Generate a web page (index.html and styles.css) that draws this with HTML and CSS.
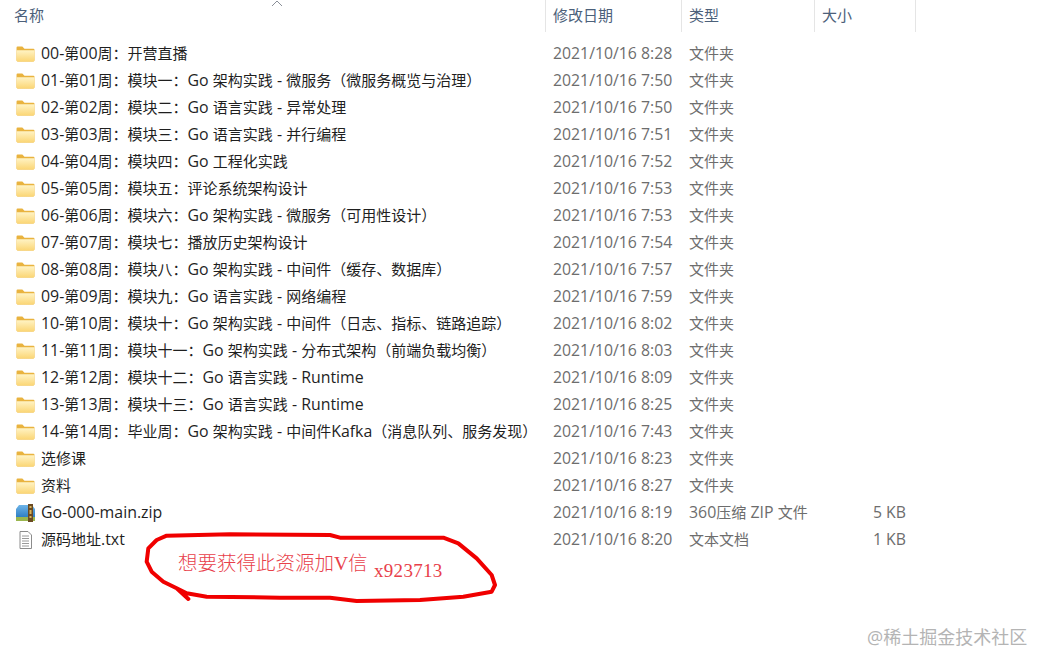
FILE: index.html
```html
<!DOCTYPE html>
<html lang="zh">
<head>
<meta charset="utf-8">
<title>文件列表</title>
<link rel="stylesheet" href="styles.css">
</head>
<body>
<svg width="0" height="0" class="defs">
  <defs>
    <linearGradient id="fg" x1="0" y1="0" x2="0" y2="1">
      <stop offset="0" stop-color="#fff3c4"/>
      <stop offset="1" stop-color="#fbd675"/>
    </linearGradient>
    <linearGradient id="zb" x1="0" y1="0" x2="0" y2="1">
      <stop offset="0" stop-color="#6db4e8"/>
      <stop offset="1" stop-color="#2f7fc4"/>
    </linearGradient>
    <symbol id="folder" viewBox="0 0 18 16">
      <path d="M0.5 2a1 1 0 0 1 1-1h4.500l2 2h8.500a1 1 0 0 1 1 1V14a1 1 0 0 1-1 1h-15a1 1 0 0 1-1-1z" fill="#e9b33f"/>
      <path d="M0.5 4.500h17V14a1 1 0 0 1-1 1h-15a1 1 0 0 1-1-1z" fill="url(#fg)"/>
    </symbol>
    <symbol id="zip" viewBox="0 0 19 18">
      <path d="M0 5l3-4h13l3 4v8H0z" fill="url(#zb)"/>
      <path d="M0 13h19v4H0z" fill="#9ab64e"/>
      <rect x="12" y="0" width="5" height="18" fill="#6b4a22"/>
      <rect x="13.500" y="2" width="2" height="2" fill="#d8b45a"/>
      <rect x="13.500" y="6" width="2" height="4" fill="#d8b45a"/>
      <rect x="13.500" y="12" width="2" height="2" fill="#d8b45a"/>
    </symbol>
    <symbol id="txt" viewBox="0 0 18 18">
      <path d="M3.500 .5h8l3.500 3.500v13.500h-11.500z" fill="#fff" stroke="#8c8c8c"/>
      <path d="M5.500 5h7M5.500 7.500h7M5.500 10h7M5.500 12.500h7M5.500 15h7" stroke="#9a9a9a"/>
    </symbol>
  </defs>
</svg>

<svg class="sort-caret" width="12" height="6" viewBox="0 0 12 6"><path d="M1 6l5-5 5 5" fill="none" stroke="#8a8f98"/></svg>

<header class="head">
  <div class="col-name">名称</div>
  <div class="col-date">修改日期</div>
  <div class="col-type">类型</div>
  <div class="col-size">大小</div>
</header>

<main class="list">
  <div class="row"><svg class="icon"><use href="#folder"/></svg><span class="col-name"><span class="la">00-</span>第<span class="la">00</span>周：开营直播</span><span class="col-date">2021/10/16 8:28</span><span class="col-type">文件夹</span></div>
  <div class="row"><svg class="icon"><use href="#folder"/></svg><span class="col-name"><span class="la">01-</span>第<span class="la">01</span>周：模块一：<span class="la">Go </span>架构实践<span class="la"> - </span>微服务（微服务概览与治理）</span><span class="col-date">2021/10/16 7:50</span><span class="col-type">文件夹</span></div>
  <div class="row"><svg class="icon"><use href="#folder"/></svg><span class="col-name"><span class="la">02-</span>第<span class="la">02</span>周：模块二：<span class="la">Go </span>语言实践<span class="la"> - </span>异常处理</span><span class="col-date">2021/10/16 7:50</span><span class="col-type">文件夹</span></div>
  <div class="row"><svg class="icon"><use href="#folder"/></svg><span class="col-name"><span class="la">03-</span>第<span class="la">03</span>周：模块三：<span class="la">Go </span>语言实践<span class="la"> - </span>并行编程</span><span class="col-date">2021/10/16 7:51</span><span class="col-type">文件夹</span></div>
  <div class="row"><svg class="icon"><use href="#folder"/></svg><span class="col-name"><span class="la">04-</span>第<span class="la">04</span>周：模块四：<span class="la">Go </span>工程化实践</span><span class="col-date">2021/10/16 7:52</span><span class="col-type">文件夹</span></div>
  <div class="row"><svg class="icon"><use href="#folder"/></svg><span class="col-name"><span class="la">05-</span>第<span class="la">05</span>周：模块五：评论系统架构设计</span><span class="col-date">2021/10/16 7:53</span><span class="col-type">文件夹</span></div>
  <div class="row"><svg class="icon"><use href="#folder"/></svg><span class="col-name"><span class="la">06-</span>第<span class="la">06</span>周：模块六：<span class="la">Go </span>架构实践<span class="la"> - </span>微服务（可用性设计）</span><span class="col-date">2021/10/16 7:53</span><span class="col-type">文件夹</span></div>
  <div class="row"><svg class="icon"><use href="#folder"/></svg><span class="col-name"><span class="la">07-</span>第<span class="la">07</span>周：模块七：播放历史架构设计</span><span class="col-date">2021/10/16 7:54</span><span class="col-type">文件夹</span></div>
  <div class="row"><svg class="icon"><use href="#folder"/></svg><span class="col-name"><span class="la">08-</span>第<span class="la">08</span>周：模块八：<span class="la">Go </span>架构实践<span class="la"> - </span>中间件（缓存、数据库）</span><span class="col-date">2021/10/16 7:57</span><span class="col-type">文件夹</span></div>
  <div class="row"><svg class="icon"><use href="#folder"/></svg><span class="col-name"><span class="la">09-</span>第<span class="la">09</span>周：模块九：<span class="la">Go </span>语言实践<span class="la"> - </span>网络编程</span><span class="col-date">2021/10/16 7:59</span><span class="col-type">文件夹</span></div>
  <div class="row"><svg class="icon"><use href="#folder"/></svg><span class="col-name"><span class="la">10-</span>第<span class="la">10</span>周：模块十：<span class="la">Go </span>架构实践<span class="la"> - </span>中间件（日志、指标、链路追踪）</span><span class="col-date">2021/10/16 8:02</span><span class="col-type">文件夹</span></div>
  <div class="row"><svg class="icon"><use href="#folder"/></svg><span class="col-name"><span class="la">11-</span>第<span class="la">11</span>周：模块十一：<span class="la">Go </span>架构实践<span class="la"> - </span>分布式架构（前端负载均衡）</span><span class="col-date">2021/10/16 8:03</span><span class="col-type">文件夹</span></div>
  <div class="row"><svg class="icon"><use href="#folder"/></svg><span class="col-name"><span class="la">12-</span>第<span class="la">12</span>周：模块十二：<span class="la">Go </span>语言实践<span class="la"> - Runtime</span></span><span class="col-date">2021/10/16 8:09</span><span class="col-type">文件夹</span></div>
  <div class="row"><svg class="icon"><use href="#folder"/></svg><span class="col-name"><span class="la">13-</span>第<span class="la">13</span>周：模块十三：<span class="la">Go </span>语言实践<span class="la"> - Runtime</span></span><span class="col-date">2021/10/16 8:25</span><span class="col-type">文件夹</span></div>
  <div class="row"><svg class="icon"><use href="#folder"/></svg><span class="col-name"><span class="la">14-</span>第<span class="la">14</span>周：毕业周：<span class="la">Go </span>架构实践<span class="la"> - </span>中间件<span class="la">Kafka</span>（消息队列、服务发现）</span><span class="col-date">2021/10/16 7:43</span><span class="col-type">文件夹</span></div>
  <div class="row"><svg class="icon"><use href="#folder"/></svg><span class="col-name">选修课</span><span class="col-date">2021/10/16 8:23</span><span class="col-type">文件夹</span></div>
  <div class="row"><svg class="icon"><use href="#folder"/></svg><span class="col-name">资料</span><span class="col-date">2021/10/16 8:27</span><span class="col-type">文件夹</span></div>
  <div class="row"><svg class="icon"><use href="#zip"/></svg><span class="col-name la">Go-000-main.zip</span><span class="col-date">2021/10/16 8:19</span><span class="col-type"><span class="la">360</span>压缩<span class="la"> ZIP </span>文件</span><span class="col-size">5 KB</span></div>
  <div class="row"><svg class="icon"><use href="#txt"/></svg><span class="col-name">源码地址<span class="la">.txt</span></span><span class="col-date">2021/10/16 8:20</span><span class="col-type">文本文档</span><span class="col-size">1 KB</span></div>
</main>

<div class="note">
  <svg width="380" height="85" viewBox="0 0 1140 255">
    <path d="M175 222L140 190L100 170L65 140L50 110L55 70L80 45L110 32L300 28L600 30L630 38L750 38L940 38L985 55L1040 100L1085 150L1095 180L1085 200L1000 215L870 225L680 228L600 218L450 218L230 215L170 205L140 190" fill="none" stroke="#f00000" stroke-width="12" stroke-linejoin="round" stroke-linecap="round"/>
  </svg>
  <span class="note-text">想要获得此资源加V信</span>
  <span class="note-id">x923713</span>
</div>

<div class="mark">@稀土掘金技术社区</div>
</body>
</html>
```
FILE: styles.css
```css
html, body {
  margin: 0;
  padding: 0;
}
body {
  width: 1047px;
  height: 666px;
  position: relative;
  overflow: hidden;
  background: #fff;
  font-family: "Open Sans", "Noto Sans CJK SC", sans-serif;
  font-size: 15px;
  color: #1f1f1f;
}
.defs {
  position: absolute;
}
.sort-caret {
  position: absolute;
  left: 271px;
  top: 0;
}
.la {
  font-size: 15.900px;
}
.head {
  display: flex;
  height: 32px;
  line-height: 31px;
  color: #4c607a;
}
.head > div {
  box-sizing: border-box;
  padding-left: 7px;
  border-right: 1px solid #e5e5e5;
}
.head .col-name {
  width: 546px;
  padding-left: 14px;
  flex: none;
}
.head .col-date {
  width: 136px;
}
.head .col-type {
  width: 133px;
}
.head .col-size {
  width: 101px;
}
.list {
  padding-top: 8px;
}
.row {
  display: flex;
  align-items: center;
  height: 27px;
  line-height: 25px;
  color: #6d6d6d;
}
.icon {
  width: 19px;
  height: 18px;
  margin-left: 16px;
  margin-right: 6px;
  flex: none;
}
.row .col-name {
  width: 512px;
  color: #1f1f1f;
  white-space: nowrap;
}
.row .col-date {
  width: 136px;
  font-size: 15.800px;
}
.row .col-type {
  width: 134px;
}
.row .col-size {
  width: 83px;
  text-align: right;
  font-size: 15.800px;
}
.note {
  position: absolute;
  left: 130px;
  top: 525px;
  width: 380px;
  height: 85px;
  color: #e8404a;
  font-family: "Liberation Serif", "Noto Sans CJK SC", serif;
}
.note svg {
  display: block;
}
.note-text {
  position: absolute;
  left: 48px;
  top: 28px;
  font-size: 19.500px;
  line-height: 22px;
  white-space: nowrap;
  font-weight: 300;
}
.note-id {
  position: absolute;
  left: 244px;
  top: 35px;
  font-size: 19px;
  line-height: 22px;
  letter-spacing: 0.300px;
}
.mark {
  position: absolute;
  left: 867px;
  top: 626px;
  font-size: 18px;
  line-height: 22px;
  color: #b4b4b4;
  white-space: nowrap;
}
```
